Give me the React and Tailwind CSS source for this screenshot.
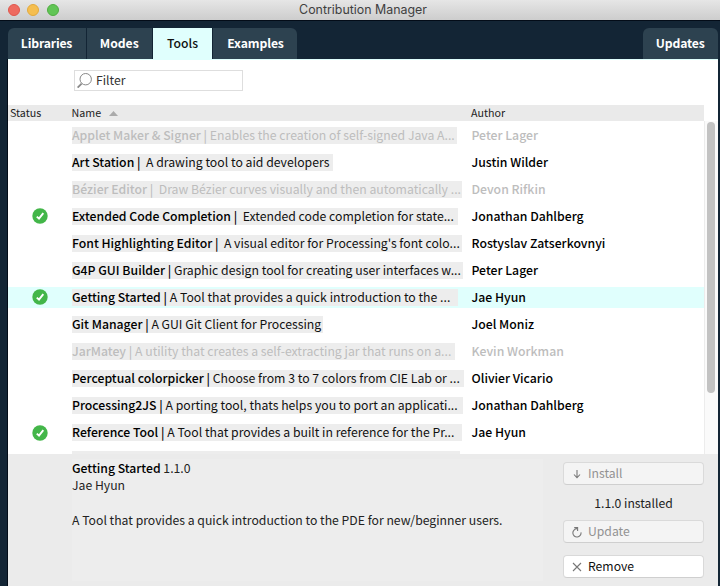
import React from "react";

const tools = [
  { name: "Applet Maker & Signer", sep: " | ", text: "Enables the creation of self-signed Java A...", author: "Peter Lager", dim: true, width: "w-[385px]" },
  { name: "Art Station", sep: " |  ", text: "A drawing tool to aid developers", author: "Justin Wilder", width: "w-[261px]" },
  { name: "Bézier Editor", sep: " |  ", text: "Draw Bézier curves visually and then automatically ...", author: "Devon Rifkin", dim: true, width: "w-[390px]" },
  { name: "Extended Code Completion", sep: " |  ", text: "Extended code completion for state...", author: "Jonathan Dahlberg", installed: true, width: "w-[386px]" },
  { name: "Font Highlighting Editor", sep: " |  ", text: "A visual editor for Processing's font colo...", author: "Rostyslav Zatserkovnyi", width: "w-[390px]" },
  { name: "G4P GUI Builder", sep: " | ", text: "Graphic design tool for creating user interfaces w...", author: "Peter Lager", width: "w-[391px]" },
  { name: "Getting Started", sep: " | ", text: "A Tool that provides a quick introduction to the ...", author: "Jae Hyun", installed: true, selected: true, width: "w-[386px]" },
  { name: "Git Manager", sep: " | ", text: "A GUI Git Client for Processing", author: "Joel Moniz", width: "w-[251px]" },
  { name: "JarMatey", sep: " | ", text: "A utility that creates a self-extracting jar that runs on a...", author: "Kevin Workman", dim: true, width: "w-[383px]" },
  { name: "Perceptual colorpicker", sep: " | ", text: "Choose from 3 to 7 colors from CIE Lab or ...", author: "Olivier Vicario", width: "w-[392px]" },
  { name: "Processing2JS", sep: " | ", text: "A porting tool, thats helps you to port an applicati...", author: "Jonathan Dahlberg", width: "w-[391px]" },
  { name: "Reference Tool", sep: " | ", text: "A Tool that provides a built in reference for the Pr...", author: "Jae Hyun", installed: true, width: "w-[390px]" },
];

function Check() {
  return (
    <svg className="mr-px size-4" viewBox="0 0 16 16">
      <circle cx="8" cy="8" r="7.7" fill="#43b649" />
      <path d="M4.8 8.6 7 10.7 11.3 5.2" fill="none" stroke="#fff" strokeWidth="1.9" />
    </svg>
  );
}

function Row({ tool }) {
  return (
    <div className="flex h-[27.05px] shrink-0 items-center">
      <div className={`flex h-[21.5px] w-full items-center ${tool.selected ? "bg-[#e0fffd]" : ""} ${tool.dim ? "text-[#bdbdbd]" : "text-[#111]"}`}>
        <div className="flex w-[64px] justify-center">{tool.installed && <Check />}</div>
        <div className="w-[399.5px]">
          <div className={`h-[17px] whitespace-pre bg-[#ededed] leading-[17px] ${tool.width}`}>
            <span className={`font-medium ${tool.dim ? "" : "text-black"}`}>{tool.name}{tool.sep}</span>
            {tool.text}
          </div>
        </div>
        <div className={`h-[17px] whitespace-nowrap font-medium leading-[17px] ${tool.dim ? "" : "text-black"}`}>{tool.author}</div>
      </div>
    </div>
  );
}

function Tab({ children, className }) {
  return (
    <div className={`flex items-center justify-center text-[12.2px] ${className}`}>{children}</div>
  );
}

function ActionButton({ children, icon, active }) {
  return (
    <div className={`flex h-[23px] w-[141px] items-center rounded-[4px] border border-b-[#cfcfcf] pl-[7px] text-[12.2px] ${active ? "border-[#d9d9d9] bg-white text-[#111]" : "border-[#dadada] bg-[#f4f4f4] text-[#929292]"}`}>
      <svg className="mr-[5px] size-3" viewBox="0 0 12 12" fill="none" stroke="#777" strokeWidth="1.1">{icon}</svg>
      {children}
    </div>
  );
}

export default function App() {
  return (
    <div className="flex h-[586px] w-[720px] flex-col overflow-hidden bg-[#132535] font-['Noto_Sans_CJK_SC',sans-serif] text-[12.25px]">
      <div className="flex h-[21px] shrink-0 items-center border-b border-[#030c18] bg-linear-to-b from-[#e6e6e6] to-[#cdcdcd]">
        <div className="flex w-[120px] gap-[7.5px] pl-[7.5px]">
          <div className="size-[12px] rounded-full border border-[#e0564c] bg-[#ee6a5f]" />
          <div className="size-[12px] rounded-full border border-[#e3aa3c] bg-[#f5be4f]" />
          <div className="size-[12px] rounded-full border border-[#50ae41] bg-[#61c555]" />
        </div>
        <div className="w-[486px] pt-px text-center font-[Inter,sans-serif] text-[12.4px] text-[#3f3f3f]">Contribution Manager</div>
      </div>
      <div className="flex h-[38px] shrink-0 items-end pl-[7.5px] text-white">
        <Tab className="mr-px h-[31px] w-[78px] rounded-tl-[6px] bg-[#2d4250] font-bold tracking-[-0.15px]">Libraries</Tab>
        <Tab className="mr-px h-[31px] w-[65.5px] bg-[#2d4250] font-bold">Modes</Tab>
        <Tab className="mr-px h-[31px] w-[59px] bg-[#e0fffd] font-medium text-[#111]">Tools</Tab>
        <Tab className="h-[31px] w-[84px] rounded-tr-[6px] bg-[#2d4250] pl-px font-bold tracking-[-0.1px]">Examples</Tab>
        <Tab className="ml-auto mr-[2px] h-[31px] w-[75.5px] rounded-t-[6px] bg-[#2d4250] font-bold tracking-[-0.1px]">Updates</Tab>
      </div>
      <div className="mr-[2px] ml-[7px] flex min-h-0 flex-1 flex-col border-l border-[#030c18] bg-white">
        <div className="h-[46px] shrink-0 border-t border-[#e0fffd] pt-[10px] pl-[66px]">
          <div className="flex h-[21px] w-[169px] items-center border border-[#dedede] pl-[2px] text-[12.2px] text-[#333]">
            <svg className="mr-[4px] size-[15px]" viewBox="0 0 15 15" fill="none" stroke="#888">
              <circle cx="8.7" cy="6.2" r="5.7" />
              <path d="m4.6 10.6-4 4" strokeWidth="1.8" />
            </svg>
            Filter
          </div>
        </div>
        <div className="flex h-4 w-[696px] shrink-0 items-center bg-[#eaeaea] pt-px pl-[2px] text-[10.7px] text-[#222]">
          <div className="w-[61.5px]">Status</div>
          <div className="flex w-[399.5px] items-center">
            Name
            <svg className="mb-px ml-[8px] h-[5px] w-[9px]" viewBox="0 0 9 5"><path d="M4.5 0 9 5H0z" fill="#aaa" /></svg>
          </div>
          <div>Author</div>
        </div>
        <div className="flex h-[333px] shrink-0">
          <div className="flex w-[696px] flex-col overflow-hidden pt-[0.5px]">
            {tools.map((tool) => <Row key={tool.name} tool={tool} />)}
            <div className="mt-[5px] ml-[64px] h-[17px] w-[388px] shrink-0 bg-[#ededed]" />
          </div>
          <div className="flex-1 border-l border-[#ececec] bg-[#fafafa] pt-px pl-[2px]">
            <div className="h-[271px] w-[8px] rounded-full bg-[#c2c2c2]" />
          </div>
        </div>
        <div className="flex min-h-0 flex-1 bg-[#ebebeb] pl-[64px] text-[#222]">
          <div className="mt-[5px] h-[122px] w-[471px] bg-[#ededed] text-[12.22px] leading-[17.4px]">
            <div className="pt-px"><span className="font-medium text-black">Getting Started</span> 1.1.0</div>
            <div>Jae Hyun</div>
            <div className="mt-[17.4px]">A Tool that provides a quick introduction to the PDE for new/beginner users.</div>
          </div>
          <div className="ml-[20px] flex w-[141px] flex-col items-center pt-[8px]">
            <ActionButton icon={<path d="M6 2v8M3 6.5 6 9.8 9 6.5" />}>Install</ActionButton>
            <div className="flex h-[35px] items-center pt-px text-[12.2px] text-[#222]">1.1.0 installed</div>
            <ActionButton icon={<path d="M10 6.3A4.1 4.1 0 1 1 6 2.8M3.2 1.6h3.4v3.4" />}>Update</ActionButton>
            <div className="h-[12px]" />
            <ActionButton active icon={<path d="m2 2 8 8M10 2 2 10" />}>Remove</ActionButton>
          </div>
        </div>
      </div>
    </div>
  );
}
